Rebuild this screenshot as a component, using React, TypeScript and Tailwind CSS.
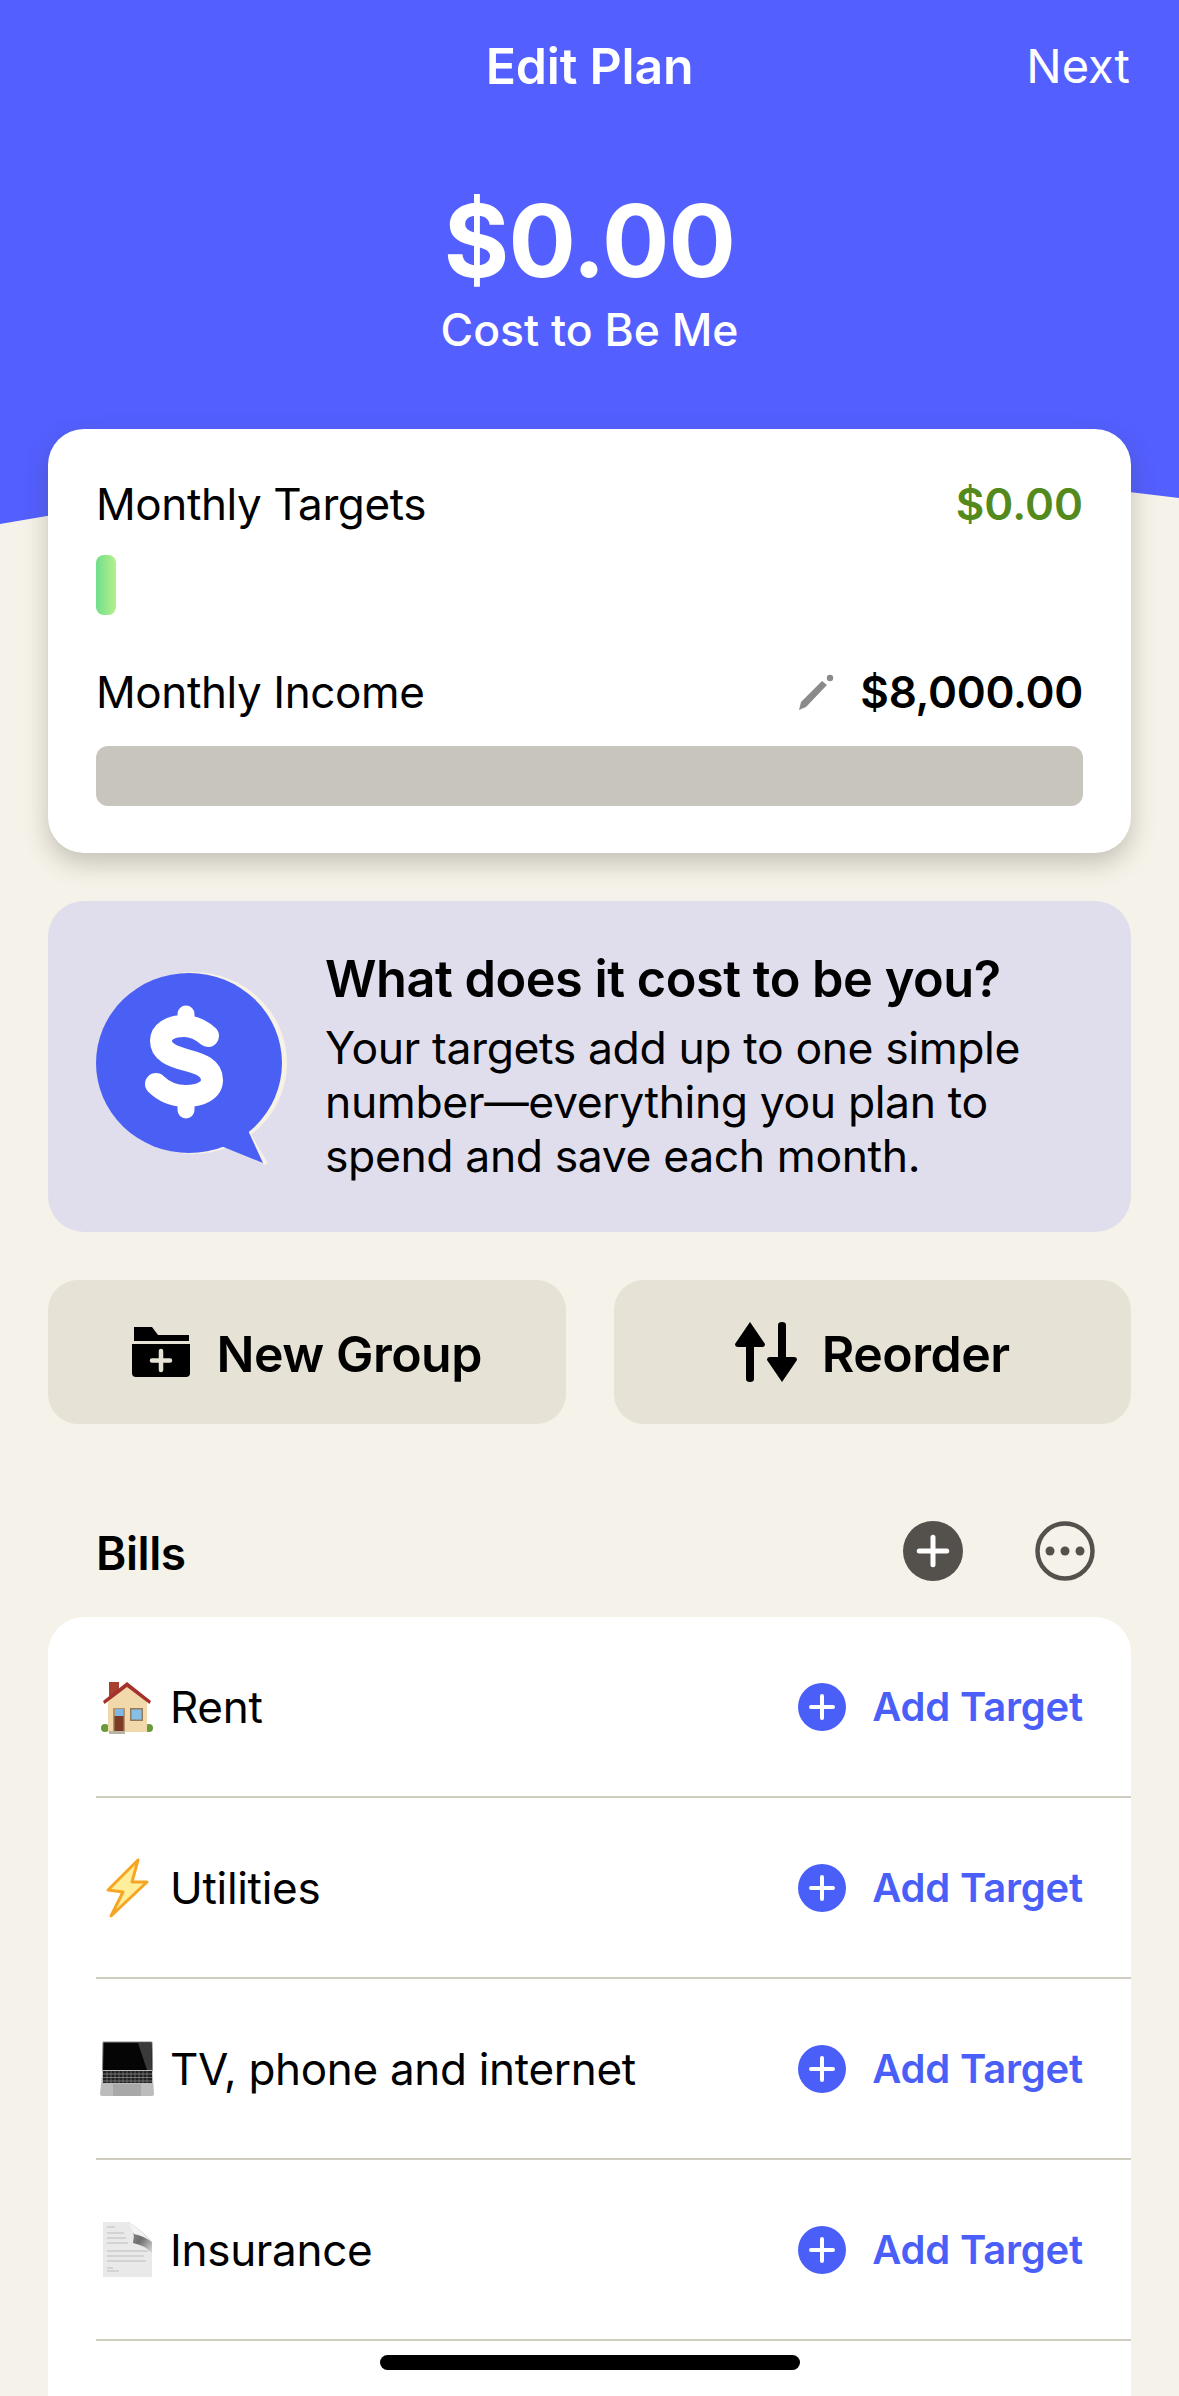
import { ReactNode } from "react";

function HouseEmoji() {
  return (
    <svg viewBox="0 0 56 56" className="w-[56px] h-[56px]">
      <circle cx="5" cy="49" r="4" fill="#6a9a3a" />
      <circle cx="49" cy="49" r="4" fill="#6a9a3a" />
      <rect x="9" y="3" width="10" height="14" fill="#a8402f" />
      <path d="M8 22 L27 6 L47 22 V53 H8 Z" fill="#f1d9ac" />
      <path d="M3 22 L27 3 L51 22 L49.5 25 L27 8 L4.5 25 Z" fill="#a5312c" />
      <rect x="13" y="29" width="12" height="23" fill="#b5926a" />
      <rect x="14.5" y="37" width="9" height="15" fill="#7b3b24" />
      <rect x="15" y="30" width="8" height="7" fill="#7fb8e4" />
      <rect x="30" y="29" width="13" height="13" fill="#927a5a" />
      <rect x="31.5" y="30.5" width="10" height="10" fill="#86bfe8" />
      <rect x="9" y="52" width="16" height="3" fill="#b9b3a6" />
    </svg>
  );
}

function BoltEmoji() {
  return (
    <svg viewBox="0 0 56 60" className="w-[56px] h-[60px]">
      <path
        d="M38 2 L8 32 L23 34 L11 58 L47 24 L32 24 Z"
        fill="#ffee9a"
        stroke="#f6a623"
        strokeWidth="3"
        strokeLinejoin="round"
      />
    </svg>
  );
}

function LaptopEmoji() {
  return (
    <svg viewBox="0 0 56 56" className="w-[56px] h-[56px]">
      <path d="M3 1 H52 L52.5 30 H2.5 Z" fill="#050505" stroke="#8b8b8b" strokeWidth="1" />
      <path d="M38 2 H51 L52 29 H47 Z" fill="#3a3a3a" />
      <path d="M2.5 29 H52.5 L54 53 Q54 55 52 55 H2 Q0 55 0 53 Z" fill="#bcbcbc" />
      <rect x="3" y="30" width="49" height="12" fill="#1f1f1f" />
      <path d="M3 33 H52 M3 36.5 H52 M3 40 H52" stroke="#8a8a8a" strokeWidth="0.8" />
      <path
        d="M7 30 V42 M11 30 V42 M15 30 V42 M19 30 V42 M23 30 V42 M27 30 V42 M31 30 V42 M35 30 V42 M39 30 V42 M43 30 V42 M47 30 V42"
        stroke="#8a8a8a"
        strokeWidth="0.6"
      />
      <rect x="13" y="43" width="28" height="12" fill="#a8a8a8" />
    </svg>
  );
}

function DocEmoji() {
  return (
    <svg viewBox="0 0 56 57" className="w-[56px] h-[57px]">
      <defs>
        <linearGradient id="fold" x1="0" y1="0" x2="1" y2="1">
          <stop offset="0" stopColor="#9a9a9a" />
          <stop offset="0.55" stopColor="#6f6f6f" />
          <stop offset="1" stopColor="#dcdcdc" />
        </linearGradient>
      </defs>
      <path d="M3 1 H28 L52 21 V56 H3 Z" fill="#e9e9e9" />
      <path d="M28 1 Q36 10 33 22 Q44 24 52 32 V21 Q40 8 28 1 Z" fill="url(#fold)" />
      <path d="M28 1 Q40 8 52 21 Q44 15 34 13 Z" fill="#f3f3f3" />
      <path
        d="M7 6 H15 M7 12 H24 M7 17 H26 M7 22 H28 M7 30 H48 M7 35 H44 M7 40 H46 M7 47 H13 M7 50 H19"
        stroke="#bdbdbd"
        strokeWidth="1.2"
      />
    </svg>
  );
}

function PlusCircle({ size, bg }: { size: string; bg: string }) {
  return (
    <svg viewBox="0 0 48 48" className={size}>
      <circle cx="24" cy="24" r="24" fill={bg} />
      <path d="M24 13 V35 M13 24 H35" stroke="#fff" strokeWidth="4" strokeLinecap="round" />
    </svg>
  );
}

function TargetRow({ icon, label }: { icon: ReactNode; label: string }) {
  return (
    <div className="ml-[48px] h-[181px] flex items-center pr-[48px] border-b-2 border-[#cfccc0]">
      <div className="w-[74px] pl-[4px] flex items-center">{icon}</div>
      <span className="flex-1 text-[44px] text-black tracking-[-0.3px]">{label}</span>
      <PlusCircle size="w-[48px] h-[48px]" bg="#4a5ff7" />
      <span className="ml-[26px] text-[40px] font-semibold text-[#4a5ff7] tracking-[-0.2px]">Add Target</span>
    </div>
  );
}

export default function App() {
  return (
    <div className="relative w-[1179px] h-[2396px] overflow-hidden bg-[#f5f2e9] font-['Inter',sans-serif]">
      {/* Blue header curve */}
      <svg viewBox="0 0 1179 530" className="absolute left-0 top-0 w-[1179px] h-[530px]">
        <path d="M0 524 Q590 420 1179 498 V0 H0 Z" fill="#535fff" />
      </svg>

      <div className="relative">
        {/* Nav */}
        <div className="h-[132px] flex items-center justify-center relative">
          <h1 className="text-[50px] font-semibold text-white tracking-[-0.2px]">Edit Plan</h1>
          <span className="absolute right-[49px] top-[38px] text-[47px] leading-[56px] text-white">Next</span>
        </div>

        {/* Total */}
        <div className="flex flex-col items-center h-[297px] pt-[49px] text-white">
          <div className="text-[100px] leading-[120px] font-bold tracking-[-0.8px]">$0.00</div>
          <div className="text-[44.5px] leading-[50px] font-medium mt-[4px]">Cost to Be Me</div>
        </div>

        {/* Summary card */}
        <div className="mx-[48px] h-[424px] rounded-[36px] bg-white shadow-[0_10px_24px_rgba(70,65,50,0.28)] px-[48px] pt-[47px]">
          <div className="flex items-center justify-between h-[56px]">
            <span className="text-[44px] text-black tracking-[-0.4px]">Monthly Targets</span>
            <span className="text-[44px] font-semibold text-[#548a1c]">$0.00</span>
          </div>
          <div className="mt-[23px] w-[20px] h-[60px] rounded-[8px] bg-gradient-to-r from-[#6ede8a] to-[#b4f08c]" />
          <div className="mt-[49px] flex items-center h-[56px]">
            <span className="flex-1 text-[44px] text-black tracking-[-0.4px]">Monthly Income</span>
            <svg viewBox="0 0 37 37" className="w-[37px] h-[37px] mr-[25px]">
              <path d="M1 36 L3 28 L24 7 L29 11 L8 33 Z" fill="#8a8a8a" />
              <circle cx="32" cy="4" r="3.2" fill="#8a8a8a" />
            </svg>
            <span className="text-[44px] font-semibold text-black tracking-[-0.3px]">$8,000.00</span>
          </div>
          <div className="mt-[26px] h-[60px] rounded-[12px] bg-[#c8c5bd]" />
        </div>

        {/* Explainer banner */}
        <div className="mx-[48px] mt-[48px] h-[331px] rounded-[36px] bg-[#e0deec] flex items-center pl-[48px]">
          <svg viewBox="0 0 194 198" className="w-[194px] h-[198px] shrink-0">
            <ellipse cx="97" cy="95" rx="94" ry="91" fill="#f7f2e6" />
            <path d="M152 165 L170 196" stroke="#f7f2e6" strokeWidth="4" />
            <ellipse cx="93" cy="95" rx="93" ry="90" fill="#4a60f5" />
            <path d="M150 158 L167 195 L125 178 Z" fill="#4a60f5" />
            <path
              d="M112 68 C104 61 96 58 88 58 C74 58 65 64 65 73 C65 84 76 88 90 92 C105 96 116 100 116 112 C116 122 105 128 90 128 C79 128 68 124 60 116"
              fill="none"
              stroke="#fff"
              strokeWidth="22"
              strokeLinecap="round"
            />
            <path d="M90 46 V56 M90 132 V142" stroke="#fff" strokeWidth="17" strokeLinecap="round" />
          </svg>
          <div className="ml-[35px]">
            <h2 className="text-[50.5px] leading-[56px] font-semibold text-black tracking-[-0.5px] whitespace-nowrap">
              What does it cost to be you?
            </h2>
            <p className="mt-[14px] text-[44.5px] leading-[54px] text-black tracking-[-0.4px] whitespace-nowrap">
              Your targets add up to one simple
              <br />
              number—everything you plan to
              <br />
              spend and save each month.
            </p>
          </div>
        </div>

        {/* Actions */}
        <div className="mx-[48px] mt-[48px] grid grid-cols-2 gap-[48px]">
          <button className="h-[144px] rounded-[30px] bg-[#e6e2d5] flex items-center justify-center gap-[27px]">
            <svg viewBox="0 0 58 50" className="w-[58px] h-[50px]">
              <path d="M2 0 H20 L26 8 H57 V14 H2 Z" fill="#000" />
              <path d="M0 17 H58 V46 Q58 50 54 50 H4 Q0 50 0 46 Z" fill="#000" />
              <path d="M29 24 V43 M20 33.5 H38" stroke="#e6e2d5" strokeWidth="4.5" strokeLinecap="round" />
            </svg>
            <span className="text-[50px] leading-[60px] mt-[4px] font-semibold text-black tracking-[-0.5px]">New Group</span>
          </button>
          <button className="h-[144px] rounded-[30px] bg-[#e6e2d5] flex items-center justify-center gap-[25px]">
            <svg viewBox="0 0 62 60" className="w-[62px] h-[60px]">
              <path d="M0 22 L15 0 L30 22 Q30 25 27 25 H19 V57 Q19 60 15 60 Q11 60 11 57 V25 H3 Q0 25 0 22 Z" fill="#000" />
              <path d="M32 38 L47 60 L62 38 Q62 35 59 35 H51 V3 Q51 0 47 0 Q43 0 43 3 V35 H35 Q32 35 32 38 Z" fill="#000" />
            </svg>
            <span className="text-[50px] leading-[60px] mt-[4px] font-semibold text-black tracking-[-0.5px]">Reorder</span>
          </button>
        </div>

        {/* Bills group */}
        <div className="mt-[97px] h-[60px] flex items-center pl-[96px] pr-[84px]">
          <span className="flex-1 text-[46px] leading-[60px] mt-[4px] font-semibold text-black tracking-[-0.4px]">Bills</span>
          <PlusCircle size="w-[60px] h-[60px]" bg="#54514d" />
          <svg viewBox="0 0 60 60" className="w-[60px] h-[60px] ml-[72px]">
            <circle cx="30" cy="30" r="27.5" fill="none" stroke="#54514d" strokeWidth="4.5" />
            <circle cx="15" cy="30" r="4.5" fill="#54514d" />
            <circle cx="30" cy="30" r="4.5" fill="#54514d" />
            <circle cx="45" cy="30" r="4.5" fill="#54514d" />
          </svg>
        </div>

        <div className="ml-[48px] mr-[48px] mt-[36px] rounded-t-[36px] bg-white h-[900px]">
          <TargetRow icon={<HouseEmoji />} label="Rent" />
          <TargetRow icon={<BoltEmoji />} label="Utilities" />
          <TargetRow icon={<LaptopEmoji />} label="TV, phone and internet" />
          <TargetRow icon={<DocEmoji />} label="Insurance" />
        </div>
      </div>

      {/* Home indicator */}
      <div className="absolute left-[380px] top-[2355px] w-[420px] h-[15px] rounded-full bg-black" />
    </div>
  );
}
